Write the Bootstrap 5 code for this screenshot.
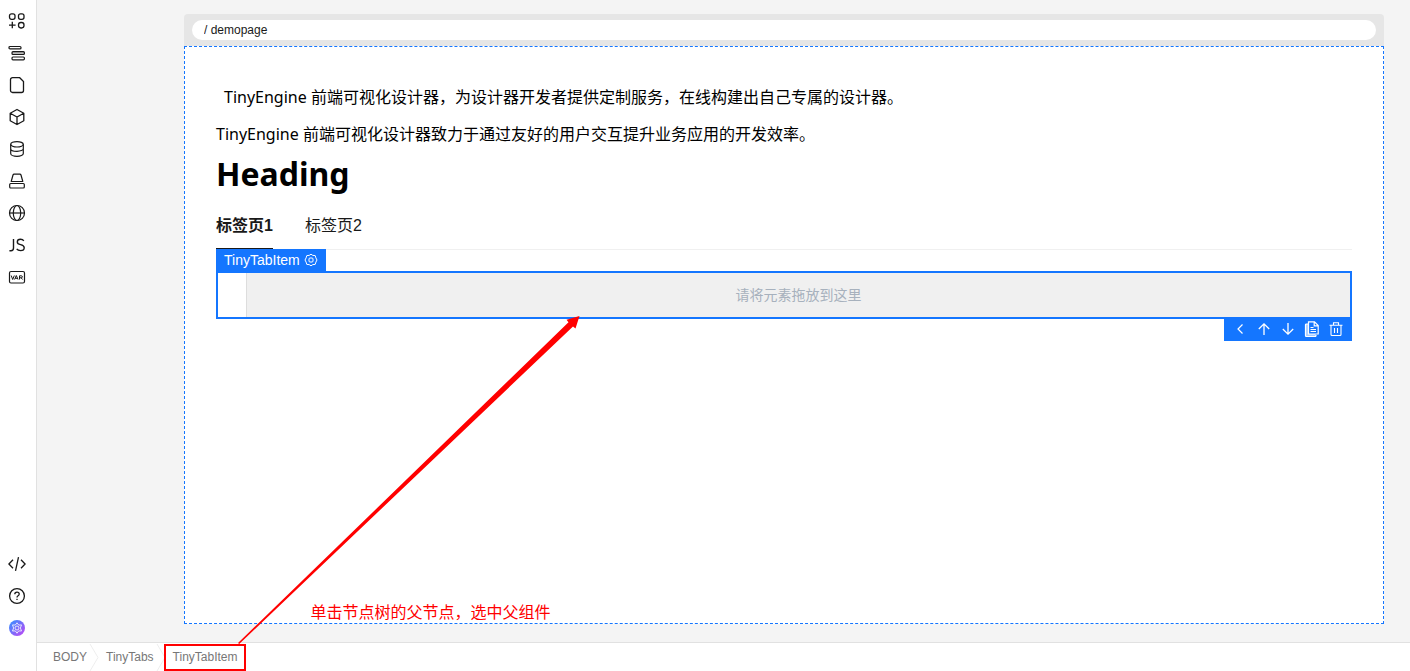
<!DOCTYPE html>
<html lang="zh-CN">
<head>
<meta charset="utf-8">
<meta name="viewport" content="width=device-width, initial-scale=1">
<title>TinyEngine</title>
<link href="https://cdn.jsdelivr.net/npm/bootstrap@5.3.0/dist/css/bootstrap.min.css" rel="stylesheet">
<style>
:root { --brand: #1476ff; --ui: "Liberation Sans", "Noto Sans CJK SC", sans-serif; --page: "Noto Sans", "Noto Sans CJK SC", sans-serif; }
body { font-family: var(--ui); font-size: 12px; line-height: 20px; color: #191919; }
button { background: none; border: 0; padding: 0; color: inherit; }
svg { display: block; fill: none; stroke: currentColor; }
.rail { width: 37px; border-right: 1px solid #e1e1e1; padding: 5px 2px 27px 0; }
.rail button { height: 32px; display: flex; align-items: center; justify-content: center; }
.stage { background: #f4f4f4; padding: 14px 26px 18px 147px; }
.address { background: #e6e6e6; border-radius: 4px 4px 0 0; padding: 6px 8px; }
.address input { height: 20px; border: 0; border-radius: 10px; padding: 0 12px; font-size: 12px; color: #191919; background: #fff; }
.canvas { border: 1px dashed var(--brand); padding: 38px 31px 0; color: #000; }
.canvas p { font-family: var(--page); font-size: 16px; line-height: 24px; margin: 0 0 13px; }
.canvas .intro { padding-left: 8px; }
.canvas h1 { font-family: var(--page); font-size: 32px; font-weight: 700; line-height: 48px; margin: -9px 0 16px; }
.tabs { gap: 32px; border-bottom: 1px solid #f0f0f0; }
.tabs button { font-size: 16px; line-height: 24px; height: 35px; padding-bottom: 11px; color: #191919; }
.tabs .active { font-weight: 700; padding-bottom: 10px; border-bottom: 1px solid #191919; }
.tag { background: var(--brand); color: #fff; font-size: 14px; height: 22px; line-height: 22px; margin-top: -1px; padding: 0 8px; gap: 4px; }
.picked { border: 2px solid var(--brand); padding-left: 28px; }
.slot { height: 44px; background: #f0f0f0; border-left: 1px solid #ddd; color: #a7b1bd; font-size: 14px; }
.tools { background: var(--brand); color: #fff; height: 22px; padding: 0 4px; }
.tools button { width: 24px; height: 20px; display: flex; align-items: center; justify-content: center; }
.crumbs { height: 29px; border-top: 1px solid #e1e1e1; }
.crumbs ol { margin: 0; padding: 1px 0 0 16px; list-style: none; height: 28px; }
.crumbs a { color: #777; text-decoration: none; line-height: 27px; display: block; }
.crumbs .chev { color: #eee; width: 19px; height: 27px; }
.crumbs .marked { border: 2px solid #f00; margin-left: -9px; height: 27px; background: #fff; }
.crumbs .marked a { padding: 0 6px 0 7px; line-height: 23px; }
.pointer { left: 72px; bottom: 25px; pointer-events: none; z-index: 2; }
.note { left: 145px; bottom: 44px; color: #f00; font-size: 16px; line-height: 24px; white-space: nowrap; z-index: 2; }
</style>
</head>
<body>
<div class="d-flex min-vh-100">
  <nav class="rail d-flex flex-column flex-shrink-0 bg-white" aria-label="插件">
    <button type="button" aria-label="组件"><svg width="18" height="18" stroke-width="1.3"><rect x="1.500" y="1.800" width="5.500" height="5.500" rx="2"/><rect x="10.500" y="1.800" width="5.500" height="5.500" rx="2"/><rect x="10.500" y="10.500" width="5.500" height="5.500" rx="2.400"/><path d="M4.300 9.800v6.500M1 13.100h6.600"/></svg></button>
    <button type="button" aria-label="大纲树"><svg width="18" height="18" stroke-width="1.2"><rect x="1" y="2.500" width="12" height="2.400" rx="1"/><rect x="4" y="7.700" width="12.400" height="2.800" rx="1" fill="#bbb"/><rect x="4" y="13" width="12.400" height="2.800" rx="1"/></svg></button>
    <button type="button" aria-label="页面"><svg width="18" height="18" stroke-width="1.3"><path d="M4.500 1.700h7.200l3.800 3.800v9a2 2 0 0 1-2 2h-9a2 2 0 0 1-2-2v-10.800a2 2 0 0 1 2-2z"/></svg></button>
    <button type="button" aria-label="区块"><svg width="18" height="18" stroke-width="1.3" stroke-linejoin="round"><path d="M9 1.500 15.800 5.200v7.500L9 16.500l-6.800-3.800V5.200zM2.200 5.200 9 9l6.800-3.800M9 9v7.500"/></svg></button>
    <button type="button" aria-label="数据源"><svg width="18" height="18" stroke-width="1.2"><ellipse cx="9" cy="4.300" rx="6.300" ry="2.700"/><path d="M2.700 4.300v9.200c0 1.500 2.800 2.800 6.300 2.800s6.300-1.300 6.300-2.800V4.300M2.700 8.700c0 1.400 2.800 2.600 6.300 2.600s6.300-1.200 6.300-2.600"/></svg></button>
    <button type="button" aria-label="资源"><svg width="18" height="18" stroke-width="1.2" stroke-linejoin="round"><path d="M3.200 9.500 5 3q.3-.9 1.200-.9h5.600q.9 0 1.200.9l1.800 6.500z"/><rect x="1.700" y="11.500" width="14.600" height="4.500" rx="1"/></svg></button>
    <button type="button" aria-label="国际化"><svg width="18" height="18" stroke-width="1.2"><circle cx="9" cy="9" r="7.500"/><ellipse cx="9" cy="9" rx="3.700" ry="7.500"/><path d="M1.500 9h15"/></svg></button>
    <button type="button" aria-label="页面JS"><svg width="18" height="18" stroke-width="1.4"><path d="M5.500 3v9q0 2.700-2.500 2.700H1.400M15.800 4.800q-1-1.600-3.300-1.600-3.200 0-3.200 2.700 0 2 3.300 2.700 3.600.8 3.600 3.100 0 2.900-3.600 2.900-2.700 0-3.900-1.700"/></svg></button>
    <button type="button" aria-label="状态管理"><svg width="18" height="18" stroke-width="1.2"><rect x="1.500" y="3.500" width="15" height="11.500" rx="1.500"/><path stroke-width="1" d="m3.200 7.500 1.500 4 1.600-4M6.600 11.500l1.700-4 1.700 4M7.200 10.300h2.200M11.500 11.500V7.800h1.700q1.200 0 1.200 1t-1.200 1h-1.700m1.600 0 1.500 1.700"/></svg></button>
    <button type="button" class="mt-auto" aria-label="源码"><svg width="18" height="18" stroke-width="1.3"><path d="M5 4.700.9 9 5 13.300M13 4.700 17.100 9 13 13.300M10.500 2.200 7.500 15.800"/></svg></button>
    <button type="button" aria-label="帮助"><svg width="18" height="18" stroke-width="1.3"><circle cx="9" cy="9" r="7.400"/><path d="M6.800 7.300q0-2.200 2.200-2.200t2.200 1.900q0 1.100-1.100 1.800T9 10.600M9 11.800v1.300"/></svg></button>
    <button type="button" aria-label="AI"><svg width="18" height="18"><defs><linearGradient id="ai" x1="0" y1="0" x2="1" y2="1"><stop offset=".1" stop-color="#3e8cff"/><stop offset=".9" stop-color="#b54cf5"/></linearGradient></defs><circle cx="9" cy="9" r="8" fill="url(#ai)" stroke="none"/><g stroke="#fff" stroke-width=".8"><path d="m9 3.800 1.700 2.300 2.800-.2L12.400 9l1.100 3-2.800-.1L9 14.200l-1.700-2.300-2.800.1L5.600 9 4.500 5.900l2.800.2z"/><circle cx="9" cy="9" r="2"/></g></svg></button>
  </nav>

  <div class="d-flex flex-column flex-grow-1">
    <main class="stage d-flex flex-column flex-grow-1">
      <div class="address"><input class="w-100 d-block" type="text" value="/ demopage" aria-label="页面地址" readonly></div>
      <section class="canvas bg-white flex-grow-1">
        <p class="intro">TinyEngine 前端可视化设计器，为设计器开发者提供定制服务，在线构建出自己专属的设计器。</p>
        <p>TinyEngine 前端可视化设计器致力于通过友好的用户交互提升业务应用的开发效率。</p>
        <h1>Heading</h1>
        <div class="tabs d-flex" role="tablist">
          <button type="button" class="active" role="tab" aria-selected="true">标签页1</button>
          <button type="button" role="tab" aria-selected="false">标签页2</button>
        </div>
        <div class="d-flex"><div class="tag d-flex align-items-center">TinyTabItem
          <svg width="14" height="14" stroke-width="1"><path d="M7 1.200 8.800 2.400l2.400.2.700 2.300L13 7l-1.100 2.100-.7 2.300-2.400.2L7 12.800l-1.800-1.200-2.400-.2-.7-2.300L1 7l1.100-2.100.7-2.300 2.400-.2z"/><rect x="5" y="5" width="4" height="4" rx="1"/></svg></div></div>
        <div class="picked"><div class="slot d-flex align-items-center justify-content-center">请将元素拖放到这里</div></div>
        <div class="d-flex justify-content-end"><div class="tools d-flex">
          <button type="button" aria-label="选择父级"><svg width="16" height="16" stroke-width="1.2"><path d="M10.500 3.500 6 8l4.500 4.500"/></svg></button>
          <button type="button" aria-label="上移"><svg width="16" height="16" stroke-width="1.3"><path d="M8 14V2.800M2.800 8 8 2.800 13.200 8"/></svg></button>
          <button type="button" aria-label="下移"><svg width="16" height="16" stroke-width="1.3"><path d="M8 2v11.200M2.800 8 8 13.200 13.200 8"/></svg></button>
          <button type="button" aria-label="复制"><svg width="16" height="16" stroke-width="1.2"><path d="M4 3H2.500Q1.500 3 1.500 4v10.500q0 1 1 1H11q1 0 1-1V14" fill="#a9cdff"/><path d="M4.500.8h6L14.200 4.500V13H4.500zM10.200.8v4h4M6.500 6.500h3M6.500 8.500h5.500M6.500 10.500h5.500" fill="#1476ff"/></svg></button>
          <button type="button" aria-label="删除"><svg width="16" height="16" stroke-width="1.1"><path d="M1.500 4.200h13M5.500 4V1.700h5V4M3 4.500v9q0 1 1 1h8q1 0 1-1v-9M6.500 7v5M9.500 7v5"/></svg></button>
        </div></div>
      </section>
    </main>
    <nav class="crumbs bg-white" aria-label="节点路径">
      <ol class="d-flex">
        <li><a href="#">BODY</a></li>
        <li aria-hidden="true"><svg class="chev" viewBox="0 0 19 27"><path d="m3 0 8 13.500L3 27"/></svg></li>
        <li><a href="#">TinyTabs</a></li>
        <li aria-hidden="true"><svg class="chev" viewBox="0 0 19 27"><path d="m3 0 8 13.500L3 27"/></svg></li>
        <li class="marked position-relative"><a href="#">TinyTabItem</a>
          <svg class="pointer position-absolute" width="343" height="328" aria-hidden="true"><path fill="#f00" stroke="none" d="M0 327 330.500 6.300 328.500 3.800 341.500 0 337.500 12.500 335 10.500 1.200 328z"/></svg>
          <span class="note position-absolute">单击节点树的父节点，选中父组件</span>
        </li>
      </ol>
    </nav>
  </div>
</div>
<script src="https://cdn.jsdelivr.net/npm/bootstrap@5.3.0/dist/js/bootstrap.bundle.min.js"></script>
</body>
</html>
